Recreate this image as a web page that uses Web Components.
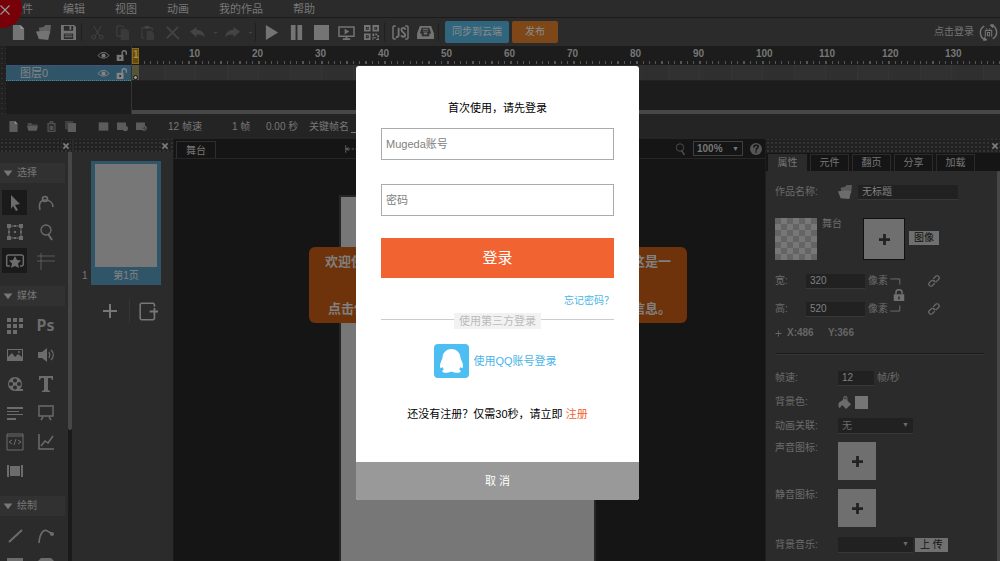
<!DOCTYPE html>
<html lang="zh-CN">
<head>
<meta charset="utf-8">
<title>Mugeda</title>
<style>
html, body { margin: 0; height: 100%; overflow: hidden; background: #151515; }
body { font-family: "Liberation Sans", "Noto Sans CJK SC", sans-serif; font-size: 11px; line-height: 16px; color: #777; }
</style>
</head>
<body>
<mu-app></mu-app>
<script>
const BASE = `
  *, *::before, *::after { box-sizing: border-box; }
  button, input, select { font: inherit; color: inherit; margin: 0; padding: 0; border: 0; border-radius: 0; background: none; appearance: none; outline: 0; }
  a { text-decoration: none; color: inherit; }
`;
function define(tag, css, html, setup) {
  customElements.define(tag, class extends HTMLElement {
    constructor() {
      super();
      this.attachShadow({ mode: "open" });
    }
    connectedCallback() {
      if (this.shadowRoot.firstChild) return;
      const t = document.createElement("template");
      t.innerHTML = `<style>${BASE}${css}</style>${typeof html === "function" ? html(this) : html}`;
      this.shadowRoot.append(t.content.cloneNode(true));
      if (setup) setup(this);
    }
  });
}

/* Glyphs on a 16 x 16 grid. Class s = stroked, everything else is filled. */
const ICONS = {
  file: '<path d="M2 0h8l4 4v12H2z"/><path d="M10 0v4h4z" fill="#999"/>',
  open: '<path d="M3 3l5-1 2-2h6l-1 9H4z" opacity=".75"/><path d="M0 7l11-1 4 1-2 9-10-1z"/>',
  save: '<path fill-rule="evenodd" d="M0 0h14l2 2v14H0zM3 1v5h10V1zM3 9v6h10V9z"/><path d="M9 1h2v4H9zM4 10h8v1H4zM4 12h8v1H4z"/>',
  cut: '<path class="s" d="M4 1l6 10M12 1L6 11"/><circle class="s" cx="4" cy="13" r="2"/><circle class="s" cx="12" cy="13" r="2"/>',
  copy: '<path class="s" d="M9 12H2V1h6l2 2"/><path d="M6 4h6l3 3v9H6z" opacity=".6"/>',
  paste: '<path class="s" d="M5 14H2V3h11v3"/><path d="M5 1h5v3H5z"/><path d="M7 6h5l3 3v7H7z" opacity=".6"/>',
  del: '<path class="s" stroke-width="2" d="M2 2l13 13M14 2L2 14"/>',
  undo: '<path d="M0 7l7-5v3c5 0 8 3 9 8-3-3-5-3-9-3v3z"/>',
  redo: '<path d="M16 7L9 2v3c-5 0-8 3-9 8 3-3 5-3 9-3v3z"/>',
  caret: '<path d="M1 6h14l-7 6z"/>',
  play: '<path d="M2 0l13 8-13 8z"/>',
  pause: '<path d="M2 0h5v16H2zM9 0h5v16H9z"/>',
  stop: '<path d="M0 0h16v16H0z"/>',
  present: '<path class="s" stroke-width="1.6" d="M0 2h16v10H0z"/><path d="M6 4l5 3-5 3zM7 12h2v2h3v2H4v-2h3z"/>',
  qr: '<path fill-rule="evenodd" d="M0 0h7v7H0zM2 2v3h3V2zM9 0h7v7H9zM11 2v3h3V2zM0 9h7v7H0zM2 11v3h3v-3z"/><path d="M3 3h1v1H3zM12 3h1v1h-1zM3 12h1v1H3zM9 9h2v3H9zM12 9h2v2h-2zM14 11h2v2h-2zM10 13h3v1h-3v2H9v-3zM14 14h2v2h-3v-1h1z"/>',
  js: '<path class="s" stroke-width="1.6" d="M3 1H1L0 2v12l1 1h2M13 1h2l1 1v12l-1 1h-2"/><path class="s" stroke-width="2" d="M6 3v8c0 2-1 2-3 2M13 5c0-3-4-2-4 0 0 3 4 3 4 6 0 2-4 2-4 0"/>',
  inbox: '<path fill-rule="evenodd" d="M2 1h12l3 8v6H-1V9zM4 3L2 9h2v3h8V9h2l-2-6z"/><path d="M5 4h6v1H5zM5 6h6v1H5zM6 8h4v2H6z"/>',
  lang: '<path class="s" stroke-width="1.4" d="M6 15A7 7 0 014 2M10 1a7 7 0 012 13"/><path d="M13 0L9 1l3 3zM3 16l4-1-3-3z"/><path class="s" d="M5 6v6M5 6h6v6M6 4v1M9 4v1M7 8h2v3H7z"/>',
  eye: '<path class="s" stroke-width="1.4" d="M0 8c5-6 11-6 16 0-5 5-11 5-16 0z"/><circle cx="8" cy="8" r="3"/>',
  unlock: '<path d="M1 7h10v9H1z"/><path class="s" stroke-width="2" d="M9 8V4c0-4 6-4 6 0v3"/><path d="M5 10h2v3H5z" fill="#1c1c1c"/>',
  folder: '<path d="M1 3h5l2 2h7v2H1z" opacity=".7"/><path d="M0 7h16l-2 7H2z"/>',
  trash: '<path class="s" stroke-width="1.5" d="M2 4h12M6 3V1h4v2M3 4v11h10V4M6 7v6M8 7v6M10 7v6"/>',
  layers: '<path d="M0 0h12v4H4v8H0z" opacity=".5"/><path d="M4 3h12v13H4z"/>',
  frame: '<path d="M1 2h14v12H1z"/>',
  frameadd: '<path d="M0 2h13v7l-2 4H0z"/><circle cx="12" cy="11" r="4"/>',
  framedel: '<path d="M0 2h13v5l-4 6H0z"/><path class="s" stroke-width="1.5" d="M9 11a3 3 0 106-1 3 3 0 10-6 1zM10 13l5-5"/>',
  pointer: '<path d="M4 0l9 9-5 1 3 5-2 1-3-5-2 3z"/>',
  node: '<path class="s" stroke-width="1.6" d="M2 15C0 7 4 5 7 5c5 0 8 3 8 7"/><circle class="s" stroke-width="1.6" cx="7" cy="4" r="2.5"/>',
  transform: '<path class="s" d="M2 2h12v12H2z"/><path d="M0 0h4v4H0zM12 0h4v4h-4zM0 12h4v4H0zM12 12h4v4h-4zM7 1h2v2H7zM7 13h2v2H7zM1 7h2v2H1zM13 7h2v2h-2zM7 7h2v2H7z"/>',
  zoom: '<circle class="s" stroke-width="1.3" cx="8" cy="6" r="5"/><path class="s" stroke-width="2" d="M10 10l4 6"/>',
  star: '<path class="s" stroke-width="1.5" d="M3 13H0l-.3-1V3L1 2h14l1.300 1v9L15 13h-2"/><path d="M8 3l2 4 4 .5-3 3 1 4.500-4-2-4 2 1-4.500-3-3L6 7z"/>',
  guides: '<path class="s" d="M-1 3h18M-1 8h18" opacity=".7"/><path class="s" d="M3 0v17" opacity=".7"/>',
  grid: '<path d="M0 0h4v4H0zM6 0h4v4H6zM12 0h4v4h-4zM0 6h4v4H0zM6 6h4v4H6zM12 6h4v4h-4zM0 12h4v4H0zM6 12h4v4H6z"/>',
  image: '<path fill-rule="evenodd" d="M0 2h16v12H0zM1 3v7l4-4 3 4 3-3 4 3V3z"/><circle cx="12" cy="5" r="1"/>',
  sound: '<path d="M0 5h4l5-4v14l-5-4H0z"/><path class="s" stroke-width="1.3" d="M11 5c1 2 1 4 0 6M13 3c3 3 3 7 0 10"/>',
  film: '<path fill-rule="evenodd" d="M8 1a7 7 0 107 7 7 7 0 00-7-7zM8 2.500a2 2 0 110 4 2 2 0 010-4zM4 6a2 2 0 110 4 2 2 0 010-4zM12 6a2 2 0 110 4 2 2 0 010-4zM8 9.500a2 2 0 110 4 2 2 0 010-4z"/><path d="M9 13h7v2H9z"/>',
  text: '<path d="M1 0h14v4h-1l-1-2h-3v12l2 1v1H4v-1l2-1V2H3L2 4H1z"/>',
  lines: '<path d="M0 2h16v2H0zM0 6h12v1H0zM0 9h16v1H0zM0 13h9v2H0z"/>',
  board: '<path class="s" stroke-width="1.4" d="M0 1h16M1 2v9h14V2M5 12l-2 3M11 12l2 3"/>',
  code: '<path class="s" d="M0 0h16v16H0zM0 2h16"/><path class="s" d="M5 6L2 8l3 2M11 6l3 2-3 2M9 5l-2 6"/>',
  chart: '<path class="s" stroke-width="1.5" d="M1 0v15h15M3 12l4-5 3 2 5-7"/>',
  slides: '<path d="M0 2h2v12H0zM3 3h1v10H3zM4 3h8v10H4zM14 2h2v12h-2zM12 3h1v10h-1z"/>',
  line: '<path class="s" stroke-width="2" d="M2 14L15 2"/>',
  arc: '<path class="s" stroke-width="1.6" d="M1 15C2 4 6 0 11 4l3 2"/><circle cx="14" cy="6" r="2"/>',
  rect: '<path d="M0 1h16v15H0z"/>',
  rrect: '<path d="M3 1h10l3 3v12H0V4z"/>',
  down: '<path d="M1 4h14l-7 9z"/>',
  plus: '<path d="M7 1h2v6h6v2H9v6H7V9H1V7h6z"/>',
  bold: '<path d="M6 0h4v6h6v4h-6v6H6v-6H0V6h6z"/>',
  addpage: '<path class="s" stroke-width="1.3" d="M13 4V2l-1-1H2L1 2v12l1 1h10l1-1v-3"/><path class="s" stroke-width="1.500" d="M9 8h7M13 5v6"/>',
  close: '<path class="s" stroke-width="4" d="M1 1l14 14M15 1L1 15"/>',
  thin: '<path class="s" stroke-width="1.5" d="M2 2l12 12M14 2L2 14"/>',
  help: '<circle cx="8" cy="8" r="8"/><path class="s" style="stroke:#151515" stroke-width="2" d="M5 6c0-4 6-4 6-1 0 2-3 2-3 5M8 11v2"/>',
  width: '<path class="s" d="M1 3v10M1 8h6M9 8h3M14 8h2M5 6L2 8l3 2"/>',
  link: '<path class="s" stroke-width="1.6" d="M7 5l4-4 2 0 2 2v2l-4 4H9L7 8M9 11l-4 4H3l-2-2v-2l4-4h2l2 1"/>',
  lock: '<path fill-rule="evenodd" d="M1 7h14v9H1zM7 10v4h2v-4z"/><path class="s" stroke-width="2" d="M4 7V4c0-4 8-4 8 0v3"/>',
  bracket: '<path class="s" d="M0 1h10v6M10 29v6H0"/>',
  bucket: '<path d="M2 15c-3-4-1-8 2-9l5-3 7 7-6 6-5-5z"/><path class="s" stroke-width="1.3" d="M7 8V3c0-3 4-3 4 0v3"/>'
};
define("mu-icon", `
  :host { display: inline-block; flex: none; width: var(--size, 16px); height: var(--size, 16px); }
  svg { display: block; width: 100%; height: 100%; fill: currentColor; overflow: visible; }
  .s { fill: none; stroke: currentColor; }
`, el => `<svg viewBox="${el.getAttribute("box") || "0 0 16 16"}" aria-hidden="true">${ICONS[el.getAttribute("name")]}</svg>`);

define("mu-grip", `
  :host { display: flex; align-items: center; justify-content: flex-end; height: 13px; padding-right: 4px; background: radial-gradient(circle, #333 0 1px, transparent 1px) 0 2px / 4px 4px #212121; color: #808080; }
  button { display: flex; padding: 1px; background: #222; --size: 6px; }
`, `<button aria-label="关闭"><mu-icon name="close"></mu-icon></button>`);

define("mu-menu", `
  :host { display: block; background: #2b2b2b; border-bottom: 1px solid #1b1b1b; }
  nav { display: flex; gap: 30px; padding: 1px 11px 0; height: 17px; }
`, `<nav><a href="#">文件</a><a href="#">编辑</a><a href="#">视图</a><a href="#">动画</a><a href="#">我的作品</a><a href="#">帮助</a></nav>`);

const tool = (n, label, cls = "") => `<button class="${cls}" aria-label="${label}"><mu-icon name="${n}"></mu-icon></button>`;
define("mu-toolbar", `
  :host { display: flex; align-items: center; height: 28px; padding-left: 6px; background: #2b2b2b; color: #747474; font-size: 10px; }
  button { flex: none; width: 25px; height: 24px; display: flex; align-items: center; justify-content: center; --size: 15px; }
  .off { color: #444; }
  .mini { width: 10px; --size: 5px; }
  i { flex: none; width: 4px; height: 18px; border-left: 1px solid #1f1f1f; }
  .pill { width: auto; height: 22px; border-radius: 2px; margin-left: 3px; padding: 0 7px; color: #8b8b8b; }
  .sync { background: #2f657d; padding: 0 7px; }
  .pub { background: #7d4718; padding: 0 13px; }
  .login { margin-left: auto; display: flex; align-items: center; gap: 6px; padding-right: 3px; --size: 17px; white-space: nowrap; }
`, tool("file", "新建") + tool("open", "打开") + tool("save", "保存") + "<i></i>" +
   tool("cut", "剪切", "off") + tool("copy", "复制", "off") + tool("paste", "粘贴", "off") + tool("del", "删除", "off") +
   tool("undo", "撤销", "off") + tool("caret", "更多撤销", "off mini") + tool("redo", "重做", "off") + tool("caret", "更多重做", "off mini") + "<i></i>" +
   tool("play", "播放") + tool("pause", "暂停") + tool("stop", "停止") + tool("present", "预览") + tool("qr", "二维码") + "<i></i>" +
   tool("js", "脚本") + tool("inbox", "资源") + "<i></i>" +
   `<button class="pill sync">同步到云端</button><button class="pill pub">发布</button>
    <a class="login" href="#">点击登录<mu-icon name="lang"></mu-icon></a>`);

define("mu-timeline", `
  :host { display: grid; grid-template-columns: 6px 126px minmax(0, 1fr); height: 68px; background: #1c1c1c; overflow: hidden; }
  .grip { background: radial-gradient(circle, #333 0 1px, transparent 1px) 0 0 / 4px 5px #212121; }
  .layers { border-right: 1px solid #333; }
  .row { display: flex; align-items: center; justify-content: flex-end; gap: 7px; padding-right: 4px; height: 19px; --size: 11px; }
  .layer { height: 16px; background: #305568; border-top: 1px dotted #458; border-bottom: 1px dotted #4588a0; color: #858585; }
  .layer span { margin: 0 auto 0 14px; }
  .right { display: flex; flex-direction: column; }
  .ruler, .track { display: flex; flex: none; overflow: hidden; }
  .ruler { height: 19px; }
  .ruler span { flex: none; width: 63px; font: bold 10px/16px "Liberation Sans", sans-serif; height: 18px; background: repeating-linear-gradient(90deg, #555 0 2%, transparent 2% 10%) 0 15px / 100% 3px no-repeat; }
  .ruler .first { width: 57px; background: repeating-linear-gradient(90deg, #555 0 2%, transparent 2% 11%) 12px 15px / 100% 3px no-repeat; }
  .ruler span:last-child { flex: 1; width: auto; min-width: 0; background: repeating-linear-gradient(90deg, #555 0 1px, transparent 1px 6px) 0 15px / 100% 3px no-repeat; }
  b { display: block; width: 7px; height: 16px; margin-top: 2px; text-align: center; background: #68490f; border: 1px solid #8a681c; color: #a78a42; line-height: 11px; }
  .track { height: 16px; background: repeating-linear-gradient(90deg, #353535 0 1px, #303030 1px 6px, #2f2f2f 6px 32px, #353535 32px 33px, #313131 33px 63px); border-bottom: 1px solid #222; }
  .key { width: 7px; background: #57543a; display: flex; align-items: flex-end; justify-content: center; }
  .key::after { content: ""; width: 5px; height: 5px; border-radius: 50%; background: #999; border: 1px solid #111; }
  .bar { margin-top: auto; height: 4px; background: #484848; }
`, `<div class="grip"></div>
  <div class="layers">
    <div class="row"><mu-icon name="eye"></mu-icon><mu-icon name="unlock"></mu-icon></div>
    <div class="row layer"><span>图层0</span><mu-icon name="eye"></mu-icon><mu-icon name="unlock"></mu-icon></div>
  </div>
  <div class="right">
    <div class="ruler"><span class="first"><b>1</b></span>${Array.from({ length: 13 }, (_, i) => `<span>${(i + 1) * 10}</span>`).join("")}</div>
    <div class="track"><div class="key"></div></div>
    <div class="bar"></div>
  </div>`);

define("mu-status", `
  :host { display: flex; align-items: center; height: 25px; padding-left: 8px; background: #242424; font-size: 10px; --size: 11px; color: #5c5c5c; white-space: pre; }
  .icons { display: flex; gap: 8px; }
  .icons + .icons { margin-left: 22px; }
  .texts { display: flex; margin-left: 21px; color: #777; }
  .texts span { flex: none; }
  .rate { width: 64px; } .count { width: 34px; } .time { width: 43px; }
  input { width: 120px; height: 14px; margin-left: 2px; border-bottom: 1px solid #777; }
  label { display: flex; }
`, `<div class="icons"><mu-icon name="file"></mu-icon><mu-icon name="folder"></mu-icon><mu-icon name="trash"></mu-icon><mu-icon name="layers"></mu-icon></div>
  <div class="icons"><mu-icon name="frame"></mu-icon><mu-icon name="frameadd"></mu-icon><mu-icon name="framedel"></mu-icon></div>
  <div class="texts"><span class="rate">12 帧速</span><span class="count">1 帧</span><span class="time">0.00 秒</span><label>关键帧名<input></label></div>`);

define("mu-tool-group", `
  :host { display: block; }
  h2 { display: flex; align-items: center; gap: 4px; margin: 0; height: 20px; padding-left: 3px; font-size: 10px; font-weight: normal; background: #313131; --size: 10px; }
  div { display: grid; grid-template-columns: 25px 25px; gap: 4px 6px; padding: 7px 2px 13px; }
  button { height: 25px; display: flex; align-items: center; justify-content: center; color: #6c6c6c; }
  .on { background: #1a1a1a; }
  .ps { font: bold 16px/25px "Noto Sans", sans-serif; }
`, el => `<h2><mu-icon name="down"></mu-icon>${el.getAttribute("label")}</h2><div>${el.getAttribute("tools").split(" ").map(n =>
    n === "ps" ? `<button class="ps">Ps</button>` : `<button aria-label="${n}" class="${n === "pointer" || n === "star" ? "on" : ""}"><mu-icon name="${n}"></mu-icon></button>`).join("")}</div>`);

define("mu-tools", `
  :host { display: flex; flex-direction: column; width: 72px; flex: none; background: #2b2b2b; overflow: hidden; }
  mu-grip { flex: none; padding-right: 2px; }
  .body { display: flex; flex: 1; min-height: 0; }
  .groups { flex: 1; padding: 11px 3px 0 0; overflow: hidden; }
  .scroll { width: 4px; background: #1a1a1a; }
  .scroll div { height: 68%; background: #474747; border-radius: 0 0 2px 2px; }
`, `<mu-grip></mu-grip><div class="body"><div class="groups">
  <mu-tool-group label="选择" tools="pointer node transform zoom star guides"></mu-tool-group>
  <mu-tool-group label="媒体" tools="grid ps image sound film text lines board code chart slides"></mu-tool-group>
  <mu-tool-group label="绘制" tools="line arc rect rrect"></mu-tool-group></div>
  <div class="scroll"><div></div></div></div>`);

define("mu-pages", `
  :host { display: block; width: 102px; flex: none; background: #2b2b2b; border-right: 1px solid #1a1a1a; font-size: 10px; }
  mu-grip { margin-left: 2px; }
  .item { display: flex; align-items: flex-end; gap: 3px; margin: 9px 12px 0 10px; line-height: 18px; }
  .item > span { width: 6px; }
  .page { flex: 1; padding: 3px 4px 0; background: #305568; text-align: center; color: #858585; }
  .page div { height: 103px; background: #777; }
  .acts { display: flex; justify-content: center; align-items: center; margin: 14px 0 0 12px; }
  button { display: flex; width: 38px; height: 24px; align-items: center; justify-content: center; }
  button + button { border-left: 1px solid #363636; --size: 19px; }
`, `<mu-grip></mu-grip>
  <div class="item"><span>1</span><div class="page"><div></div>第1页</div></div>
  <div class="acts"><button aria-label="添加页"><mu-icon name="plus"></mu-icon></button><button aria-label="从模板添加"><mu-icon name="addpage"></mu-icon></button></div>`);

define("mu-stage", `
  :host { display: flex; flex-direction: column; flex: 1; min-width: 0; background: #151515; font-size: 10px; }
  .tabs { display: flex; align-items: center; height: 20px; flex: none; padding: 0 3px 0 2px; border-bottom: 1px solid #262626; }
  .tab { align-self: flex-end; height: 17px; line-height: 15px; padding: 0 9px; border: 1px solid #2e2e2e; border-bottom: 0; }
  .w { margin-left: 129px; --size: 12px; }
  .z { margin-left: auto; --size: 12px; color: #4c4c4c; }
  .q { --size: 12px; color: #555; margin-left: 7px; }
  select { width: 50px; height: 15px; margin-left: 7px; padding-left: 3px; border: 1px solid #3f3f3f; font-weight: bold; font-size: 10px; line-height: 13px; }
  .pick { position: relative; display: flex; }
  .pick::after { content: "▼"; position: absolute; right: 4px; top: 0; font-size: 7px; line-height: 15px; pointer-events: none; }
  .canvas { flex: 1; width: 257px; margin: 36px 0 0 165px; background: #777; border: 2px solid #262626; border-bottom: 0; }
`, `<div class="tabs"><button class="tab">舞台</button><mu-icon class="w" name="width"></mu-icon><mu-icon class="z" name="zoom"></mu-icon>
  <div class="pick"><select aria-label="缩放"><option>100%</option></select></div><mu-icon class="q" name="help"></mu-icon></div><div class="canvas"></div>`);

define("mu-props", `
  :host { display: flex; flex-direction: column; width: 235px; flex: none; background: #2b2b2b; border-left: 1px solid #1d1d1d; font-size: 10px; line-height: 16px; overflow: hidden; }
  mu-grip { flex: none; padding-right: 1px; height: 14px; }
  .tabs { display: flex; gap: 3px; height: 18px; flex: none; padding: 1px 0 0 2px; background: #151515; }
  .tabs button { width: 39px; border: 1px solid #2b2b2b; border-bottom: 0; line-height: 14px; }
  .tabs .on { background: #2b2b2b; }
  .body { display: flex; flex: 1; min-height: 0; }
  form { flex: 1; padding-left: 9px; min-width: 0; white-space: nowrap; color: #6c6c6c; }
  .scroll { width: 3px; background: #474747; border-radius: 2px 0 0 0; }
  .row { display: flex; align-items: center; height: 16px; }
  .name { flex: none; width: 63px; }
  .short { flex: none; width: 31px; }
  input { height: 15px; padding-left: 4px; background: #212121; border-bottom: 1px solid #383838; min-width: 0; color: #808080; }
  .title { width: 100px; margin-left: 6px; }
  .num { width: 60px; margin-right: 3px; }
  .fps { width: 36px; margin-right: 3px; }
  .r1 { margin-top: 13px; --size: 14px; }
  .pics { display: flex; margin-top: 18px; height: 42px; }
  .check { width: 42px; background: repeating-conic-gradient(#777 0 25%, #646464 0 50%) 0 0 / 12px 12px; margin-right: 5px; }
  .add { width: 38px; height: 38px; display: flex; align-items: center; justify-content: center; background: #6f6f6f; color: #222; --size: 11px; }
  .pics span { width: 41px; line-height: 12px; }
  .pics .add { width: 42px; height: 42px; border: 1px solid #111; }
  .btn { height: 14px; line-height: 14px; padding: 0 5px; background: #707070; color: #111; margin-left: 2px; white-space: pre; }
  .pics .btn { margin: 13px 0 0 4px; }
  .size { display: grid; grid-template-columns: 113px 42px 20px; margin-top: 13px; align-items: center; }
  .size .row + .row { margin-top: 12px; }
  .pair { display: grid; color: #707070; --size: 12px; }
  .pair > * { grid-area: 1 / 1; align-self: center; }
  .pair .br { width: 12px; height: 34px; margin-left: 2px; }
  .pair mu-icon:last-child { margin-left: 5px; background: #2b2b2b; }
  .links { display: grid; gap: 16px; --size: 12px; margin-left: -2px; }
  .xy { margin-top: 8px; --size: 7px; font-weight: bold; color: #666; }
  .xy span { width: 41px; } .xy mu-icon { margin-right: 5px; }
  hr { margin: 12px 12px 15px 0; border: 0; border-top: 1px solid #1c1c1c; border-bottom: 1px solid #343434; }
  .g { margin-bottom: 8px; --size: 13px; }
  .sw { width: 13px; height: 13px; background: #757575; margin-left: 4px; }
  .pick { position: relative; display: flex; }
  .pick::after { content: "▼"; position: absolute; right: 4px; top: 0; font-size: 7px; line-height: 14px; pointer-events: none; }
  select { width: 75px; height: 16px; padding-left: 4px; background: #212121; border-bottom: 1px solid #383838; line-height: 15px; }
  .big { display: flex; height: 38px; margin-bottom: 9px; line-height: 12px; }
  .music { margin-top: 10px; }
`, `<mu-grip></mu-grip>
  <div class="tabs"><button class="on">属性</button><button>元件</button><button>翻页</button><button>分享</button><button>加载</button></div>
  <div class="body"><form>
    <div class="row r1"><label class="name" for="t">作品名称:</label><mu-icon name="open"></mu-icon><input id="t" class="title" value="无标题"></div>
    <div class="pics"><div class="check"></div><span>舞台</span><button type="button" class="add" aria-label="添加图像"><mu-icon name="bold"></mu-icon></button><button type="button" class="btn">图像</button></div>
    <div class="size">
      <div><div class="row"><label class="short" for="w">宽:</label><input id="w" class="num" value="320">像素</div>
      <div class="row"><label class="short" for="h">高:</label><input id="h" class="num" value="520">像素</div></div>
      <div class="pair"><mu-icon class="br" name="bracket" box="0 0 12 36"></mu-icon><mu-icon name="lock"></mu-icon></div>
      <div class="links"><mu-icon name="link"></mu-icon><mu-icon name="link"></mu-icon></div>
    </div>
    <div class="row xy"><mu-icon name="plus"></mu-icon><span>X:486</span><span>Y:366</span></div>
    <hr>
    <div class="row g"><label class="name" for="f">帧速:</label><input id="f" class="fps" value="12">帧/秒</div>
    <div class="row g"><span class="name">背景色:</span><mu-icon name="bucket"></mu-icon><div class="sw"></div></div>
    <div class="row g"><label class="name" for="a">动画关联:</label><div class="pick"><select id="a"><option>无</option></select></div></div>
    <div class="big"><span class="name">声音图标:</span><button type="button" class="add" aria-label="声音图标"><mu-icon name="bold"></mu-icon></button></div>
    <div class="big"><span class="name">静音图标:</span><button type="button" class="add" aria-label="静音图标"><mu-icon name="bold"></mu-icon></button></div>
    <div class="row music"><label class="name" for="m">背景音乐:</label><div class="pick"><select id="m"></select></div><button type="button" class="btn">上 传</button></div>
  </form><div class="scroll"></div></div>`);

define("mu-tip", `
  :host { position: absolute; inset: 9px 4px 0 0; display: flex; align-items: center; justify-content: center; pointer-events: none; }
  div { width: 378px; height: 76px; padding: 5px 16px 4px; border-radius: 6px; background: #6e330a; color: #808080; font-size: 13px; font-weight: bold; line-height: 20px; display: flex; flex-direction: column; justify-content: space-between; }
  p { margin: 0; display: flex; justify-content: space-between; }
  p + p { padding: 0 0 0 3px; }
`, `<div><p><span>欢迎使</span><span>这是一</span></p><p><span>点击使</span><span>信息。</span></p></div>`);

define("mu-login", `
  :host { position: absolute; inset: 5px 5px 0 0; display: flex; align-items: center; justify-content: center; }
  form { width: 283px; background: #fff; border-radius: 3px; overflow: hidden; color: #000; }
  .in { padding: 34px 25px 40px; display: flex; flex-direction: column; }
  h1 { margin: 0 0 12px; font-size: 11px; line-height: 16px; font-weight: normal; text-align: center; }
  input { height: 32px; border: 1px solid #aaa; padding: 0 4px; margin-bottom: 24px; }
  input::placeholder { color: #808080; opacity: 1; }
  .go { height: 40px; margin-top: -2px; background: #f16331; color: #fff; font-size: 15px; }
  .forgot { align-self: flex-end; margin: 15px 0 4px; font-size: 10px; color: #4ab5e8; }
  .or { display: flex; align-items: center; color: #bbb; }
  .or::before, .or::after { content: ""; flex: 1; height: 1px; background: #ccc; margin-bottom: 4px; }
  .or span { background: #f2f2f2; padding: 0 5px; }
  .qq { align-self: center; display: flex; align-items: center; gap: 4px; margin: 15px 4px 28px 0; color: #4ab5e8; }
  .qq svg { width: 35px; height: 34px; }
  p { margin: 0; text-align: center; white-space: nowrap; }
  p a { color: #f16331; }
  .cancel { display: block; width: 100%; height: 38px; background: #999; color: #fff; }
`, `<form><div class="in"><h1>首次使用，请先登录</h1>
  <input aria-label="Mugeda账号" placeholder="Mugeda账号"><input type="password" aria-label="密码" placeholder="密码">
  <button type="button" class="go">登录</button><a class="forgot" href="#">忘记密码？</a>
  <div class="or"><span>使用第三方登录</span></div>
  <a class="qq" href="#"><svg viewBox="0 0 35 34" aria-hidden="true"><rect width="35" height="34" rx="4" fill="#4dbef2"/><path fill="#fff" d="M17.500 5C22 5 26 8 26.500 13.500c0 1 .5 2 1 3 1.500 3 2 6 1 7.500-.6.500-1.500-.5-2-1-.3 1-1 2-1.500 2.500 1.500.8 2 1.300 1.500 2.300-.8 1.400-6 1.400-8 0h-2c-2 1.400-7.200 1.400-8 0-.5-1 0-1.500 1.500-2.300-.6-.6-1.200-1.500-1.500-2.500-.5.500-1.400 1.500-2 1-1-1.500-.5-4.500 1-7.500.5-1 1-2 1-3C9 8 13 5 17.500 5z"/></svg>使用QQ账号登录</a>
  <p>还没有注册？仅需30秒，请立即 <a href="#">注册</a></p></div>
  <button type="button" class="cancel">取 消</button></form>`);

define("mu-exit", `
  :host { position: absolute; left: -18px; top: -12px; }
  button { width: 40px; height: 40px; border-radius: 50%; background: #780008; color: #999; padding: 4px 0 0 6px; --size: 12px; display: flex; align-items: center; justify-content: center; }
`, `<button aria-label="退出"><mu-icon name="thin"></mu-icon></button>`);

define("mu-app", `
  :host { position: relative; display: flex; flex-direction: column; height: 100vh; overflow: hidden; }
  mu-menu, mu-toolbar, mu-timeline, mu-status { flex: none; }
  main { display: flex; flex: 1; min-height: 0; }
`, `<mu-menu></mu-menu><mu-toolbar></mu-toolbar><mu-timeline></mu-timeline><mu-status></mu-status>
  <main><mu-tools></mu-tools><mu-pages></mu-pages><mu-stage></mu-stage><mu-props></mu-props></main>
  <mu-tip></mu-tip><mu-login></mu-login><mu-exit></mu-exit>`);
</script>
</body>
</html>
